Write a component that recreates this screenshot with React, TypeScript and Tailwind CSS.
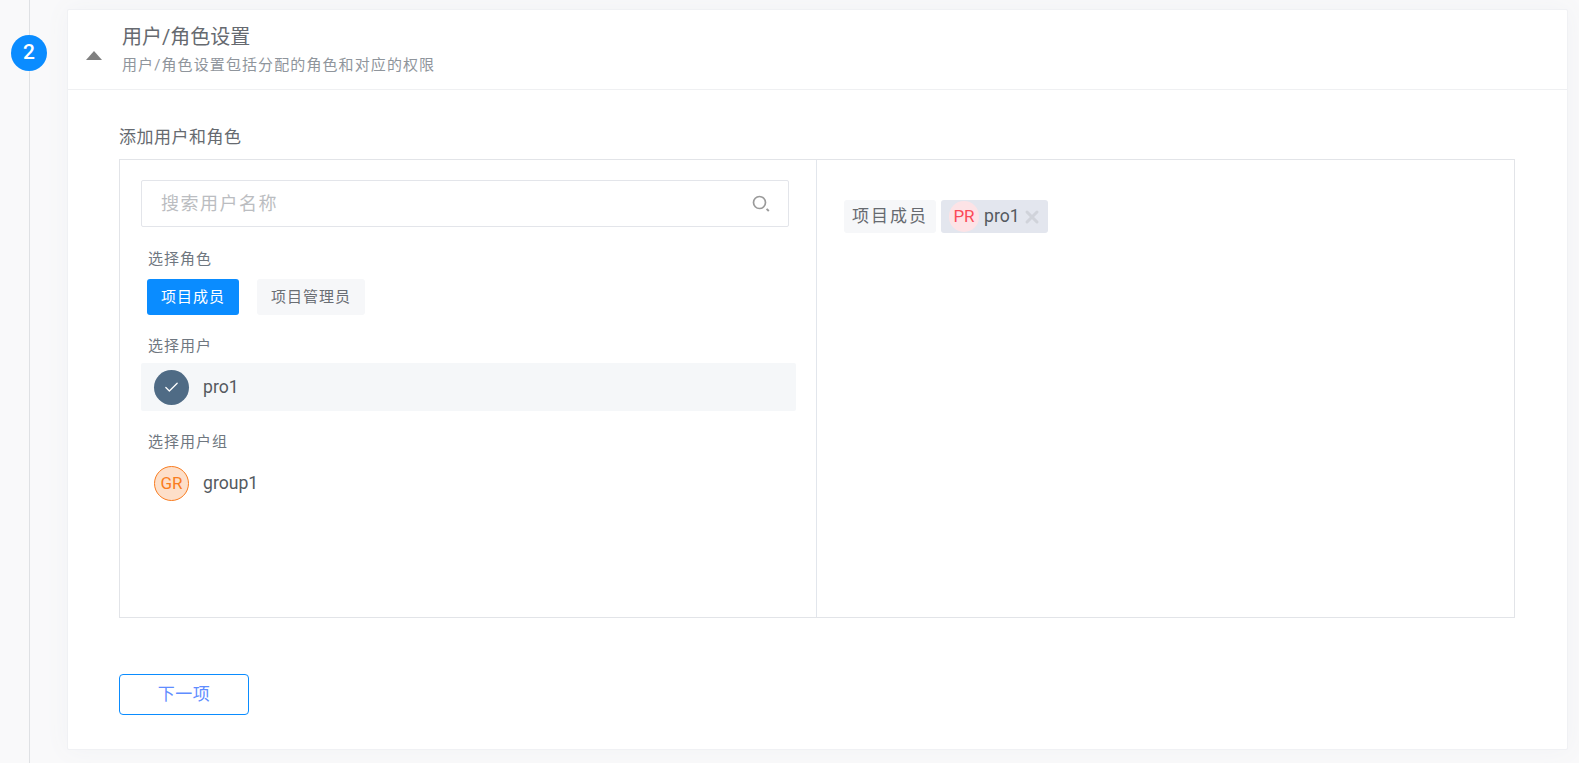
import { Check, X } from 'lucide-react';

const FONT = "font-['Roboto','Noto_Sans_CJK_SC',sans-serif]";

function SectionLabel({ children }: { children: React.ReactNode }) {
  return <div className="pl-[7px] text-[15px] leading-[20px] tracking-[1px] text-[#6f7780]">{children}</div>;
}

function SearchIcon() {
  return (
    <svg width="18" height="18" viewBox="0 0 18 18" fill="none" stroke="#9a9a9a">
      <circle cx="7.5" cy="7.5" r="6" strokeWidth="1.7" />
      <path d="M14.6 13.8l2.2 2.2" strokeWidth="1.9" />
    </svg>
  );
}

export default function App() {
  return (
    <div className={`flex h-[763px] w-full overflow-hidden bg-[#f9f9fa] ${FONT}`}>
      {/* step rail */}
      <div className="relative flex w-[67px] shrink-0 justify-start pl-[11px] pt-[35px]">
        <div className="absolute bottom-0 left-[29px] top-0 w-px bg-[#dfe1e4]" />
        <div className="relative flex h-[36px] w-[36px] items-center justify-center rounded-full bg-[#0a8cff] text-[21px] font-medium text-white">
          2
        </div>
      </div>

      <div className="flex-1 pr-[11px] pt-[9px]">
        <div className="flex h-[741px] flex-col rounded-[2px] border border-[#f0f1f4] bg-white shadow-[0_0_24px_#f1f2f5]">
          <div className="flex h-[80px] shrink-0 items-center border-b border-[#eff0f2]">
            <div className="ml-[18px] mt-[41px] h-0 w-0 self-start border-x-[8.5px] border-b-[9px] border-x-transparent border-b-[#808080]" />
            <div className="ml-[20px]">
              <div className="text-[20px] leading-[28px] text-[#666a70]">用户/角色设置</div>
              <div className="mt-[3px] text-[15px] leading-[22px] tracking-[1.1px] text-[#8f959c]">
                用户/角色设置包括分配的角色和对应的权限
              </div>
            </div>
          </div>

          <div className="pl-[51px] pr-[52px] pt-[35px]">
            <div className="text-[17px] leading-[24px] tracking-[0.5px] text-[#666a70]">添加用户和角色</div>

            <div className="mt-[10px] flex h-[459px] border border-[#e2e4e8]">
              <div className="w-[697px] shrink-0 border-r border-[#e2e6ec] pl-[21px] pt-[20px]">
                <div className="flex h-[47px] w-[648px] items-center justify-between rounded-[2px] border border-[#e3e5ea] pl-[19px] pr-[18px]">
                  <span className="text-[18px] tracking-[1.5px] text-[#bbbdc1]">搜索用户名称</span>
                  <SearchIcon />
                </div>

                <div className="mt-[22px]">
                  <SectionLabel>选择角色</SectionLabel>
                </div>
                <div className="mt-[10px] flex gap-[18px] pl-[6px]">
                  <div className="flex h-[36px] w-[92px] items-center justify-center rounded-[3px] bg-[#0a8cff] text-[15px] tracking-[1px] text-white">
                    项目成员
                  </div>
                  <div className="flex h-[36px] w-[108px] items-center justify-center rounded-[3px] bg-[#f6f7f9] text-[15px] tracking-[1px] text-[#6a6e74]">
                    项目管理员
                  </div>
                </div>

                <div className="mt-[21px]">
                  <SectionLabel>选择用户</SectionLabel>
                </div>
                <div className="mt-[7px] flex h-[48px] w-[655px] items-center gap-[14px] rounded-[2px] bg-[#f5f7f9] pl-[13px]">
                  <div className="flex h-[35px] w-[35px] items-center justify-center rounded-full bg-[#4f6b85]">
                    <Check size={17} color="#ffffff" strokeWidth={1.8} />
                  </div>
                  <span className="text-[17.6px] text-[#555a60]">pro1</span>
                </div>

                <div className="mt-[21px]">
                  <SectionLabel>选择用户组</SectionLabel>
                </div>
                <div className="mt-[14px] flex items-center gap-[14px] pl-[13px]">
                  <div className="flex h-[35px] w-[35px] items-center justify-center rounded-full border border-[#f97c20] bg-[#fddfc9] text-[17px] text-[#f97c20]">
                    GR
                  </div>
                  <span className="text-[17.6px] text-[#555a60]">group1</span>
                </div>
              </div>

              <div className="flex flex-1 items-start gap-[5px] pl-[27px] pt-[40px]">
                <div className="flex h-[33px] w-[92px] items-center justify-center rounded-[3px] bg-[#f6f7f9] text-[17px] tracking-[2px] text-[#666a70]">
                  项目成员
                </div>
                <div className="flex h-[33px] w-[107px] items-center rounded-[3px] bg-[#e3e6ee] pl-[8px]">
                  <div className="flex h-[31px] w-[30px] items-center justify-center rounded-full bg-[#fde3e6] text-[17px] text-[#fb4a57]">
                    PR
                  </div>
                  <span className="ml-[5px] text-[17.6px] text-[#555a60]">pro1</span>
                  <X size={20} color="#d0d3da" strokeWidth={3.6} className="ml-[2px]" />
                </div>
              </div>
            </div>

            <div className="mt-[56px] flex h-[41px] w-[130px] items-center justify-center rounded-[4px] border border-[#0a8cff] text-[17px] tracking-[0.5px] text-[#5f8dff]">
              下一项
            </div>
          </div>
        </div>
      </div>
    </div>
  );
}
